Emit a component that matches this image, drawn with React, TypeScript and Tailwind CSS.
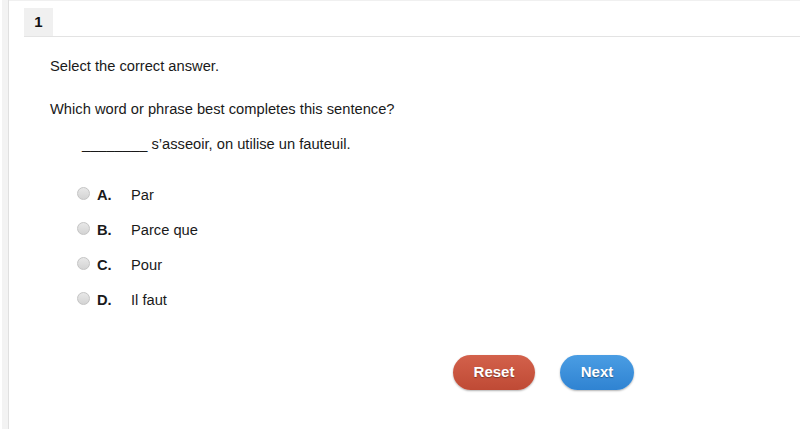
import React from "react";

const options = [
  { l: "A.", t: "Par" },
  { l: "B.", t: "Parce que" },
  { l: "C.", t: "Pour" },
  { l: "D.", t: "Il faut" },
];

export default function App() {
  return (
    <div
      className="flex h-[429px] w-[800px] overflow-hidden bg-white text-[#1a1a1a]"
      style={{ fontFamily: '"Liberation Sans", Arial, sans-serif' }}
    >
      <div className="h-full w-[9px] border-l-2 border-white border-r border-r-[#e0e0e0] bg-[#f3f3f3]" />
      <div className="flex flex-1 flex-col border-t border-[#f0f0f0]">
        <div className="ml-[15px] mt-[7px] flex h-[29px] border-b border-[#e3e3e3]">
          <div className="flex w-[29px] items-center justify-center bg-[#f0f0f0] text-[15px] font-bold text-[#111]">
            1
          </div>
        </div>
        <div className="pl-[41px] text-[14.7px] leading-[18px]">
          <p className="mt-[20px]">Select the correct answer.</p>
          <p className="mt-[25px]">Which word or phrase best completes this sentence?</p>
          <p className="ml-[32px] mt-[17px]">________ s’asseoir, on utilise un fauteuil.</p>
          <div className="ml-[27px] mt-[33px] flex flex-col gap-[17px]">
            {options.map((o) => (
              <div key={o.l} className="flex items-center">
                <span className="mt-[-4px] h-[13px] w-[13px] rounded-full border border-[#c4c4c4] bg-gradient-to-b from-[#e8e8e8] to-[#d4d4d4]" />
                <span className="ml-[7px] w-[34px] font-bold">{o.l}</span>
                <span>{o.t}</span>
              </div>
            ))}
          </div>
        </div>
        <div className="ml-[444px] mt-[46px] flex gap-[25px]">
          <button className="h-[35px] w-[82px] rounded-full bg-gradient-to-b from-[#d3614b] to-[#bf4a35] text-[15px] font-bold text-white shadow-[0_1px_2px_rgba(0,0,0,0.3)] [text-shadow:0_1px_1px_rgba(0,0,0,0.35)]">
            Reset
          </button>
          <button className="h-[35px] w-[74px] rounded-full bg-gradient-to-b from-[#4a9de3] to-[#2f83d2] text-[15px] font-bold text-white shadow-[0_1px_2px_rgba(0,0,0,0.3)] [text-shadow:0_1px_1px_rgba(0,0,0,0.35)]">
            Next
          </button>
        </div>
      </div>
    </div>
  );
}
